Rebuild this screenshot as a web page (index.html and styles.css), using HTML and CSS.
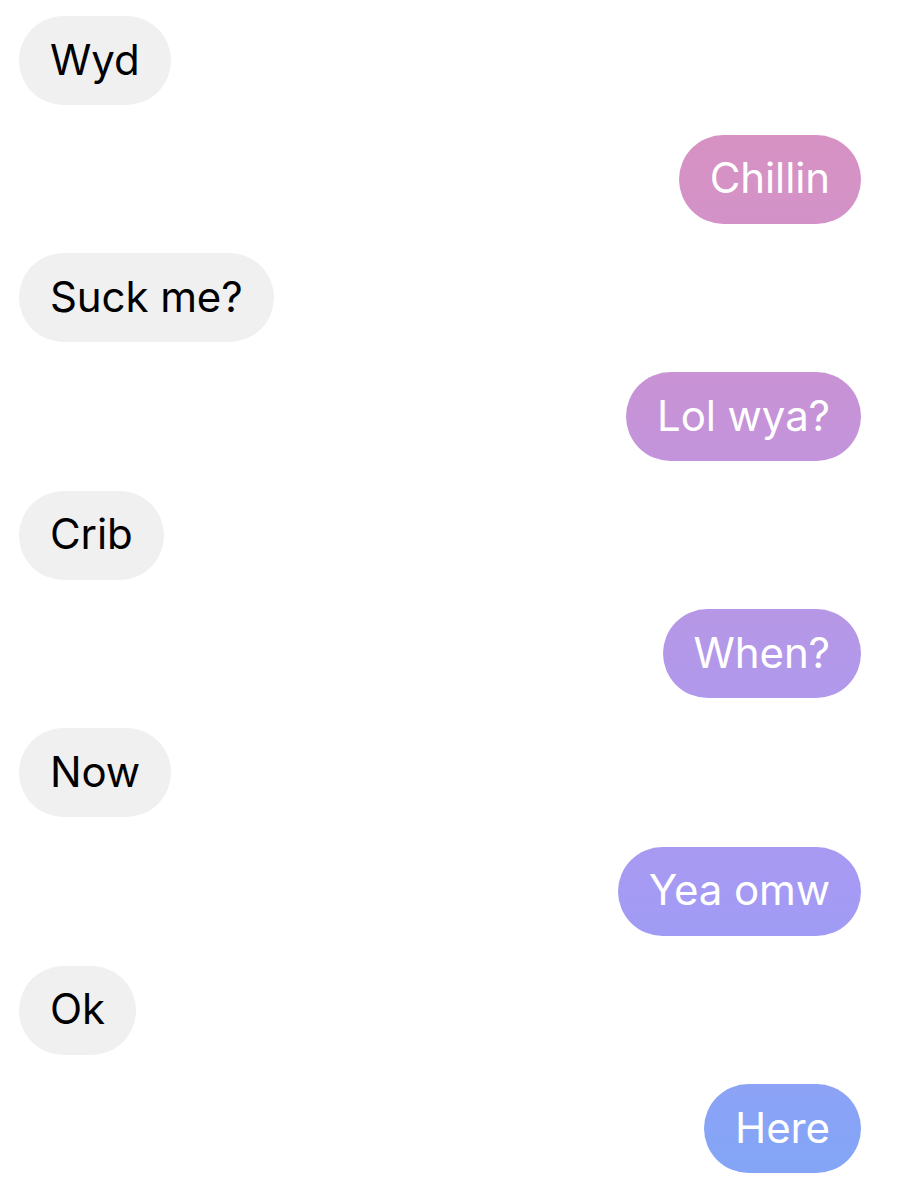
FILE: index.html
```html
<!DOCTYPE html>
<html>
<head>
<meta charset="utf-8">
<link rel="stylesheet" href="styles.css">
</head>
<body>
<div class="chat">
  <div class="msg in">Wyd</div>
  <div class="msg out">Chillin</div>
  <div class="msg in">Suck me?</div>
  <div class="msg out">Lol wya?</div>
  <div class="msg in">Crib</div>
  <div class="msg out">When?</div>
  <div class="msg in">Now</div>
  <div class="msg out">Yea omw</div>
  <div class="msg in">Ok</div>
  <div class="msg out">Here</div>
</div>
</body>
</html>
```
FILE: styles.css
```css
html, body {
  margin: 0;
  padding: 0;
  background: #ffffff;
}
.chat {
  display: flex;
  flex-direction: column;
  gap: 29.7px;
  padding: 16px 59px 0 19px;
  font-family: "Inter", "Liberation Sans", sans-serif;
}
.msg {
  height: 89px;
  box-sizing: border-box;
  display: flex;
  align-items: center;
  padding: 0 31px 3px;
  border-radius: 45px;
  font-size: 42px;
  letter-spacing: -0.1px;
}
.in {
  align-self: flex-start;
  background: #f0f0f0;
  color: #000;
}
.out {
  align-self: flex-end;
  color: #fff;
  background-image: linear-gradient(180deg, #dc90bd 0px, #d592c5 180px, #c693d8 417px, #b398e9 655px, #a59af4 891px, #87a4f6 1129px, #82a6f7 1200px);
  background-attachment: fixed;
}
```
